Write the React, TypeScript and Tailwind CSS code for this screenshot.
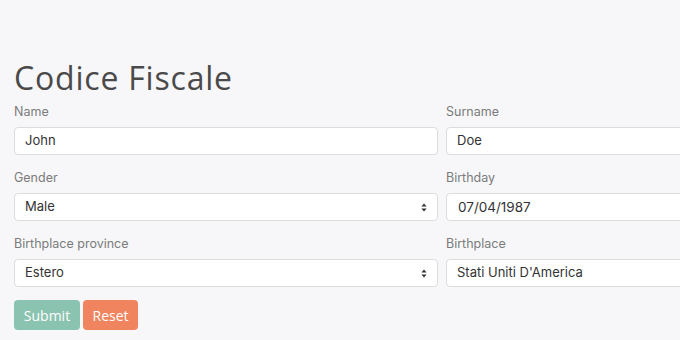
import React from "react";

const Arrows = () => (
  <svg width="6" height="9" viewBox="0 0 6 9" className="shrink-0">
    <path d="M3 0.5 L5.6 3.6 L0.4 3.6 Z" fill="#333" />
    <path d="M3 8.5 L5.6 5.4 L0.4 5.4 Z" fill="#333" />
  </svg>
);

function Field({ label, value, select, date }: { label: string; value: string; select?: boolean; date?: boolean }) {
  return (
    <div className="flex flex-col">
      <div className="h-[18px] leading-[18px] text-[12.5px] text-[#7b7b7b] mb-[6px]">{label}</div>
      <div className="h-[28px] bg-white border border-[#dcdcdc] rounded-[4px] flex items-center pl-[10px] pr-[10px] mb-[14px]">
        <span className={date ? "text-[13.5px] text-[#333] pl-[1px] flex-1" : "text-[13px] text-[#333] flex-1"}>{value}</span>
        {select && <Arrows />}
      </div>
    </div>
  );
}

export default function App() {
  return (
    <div
      className="w-[680px] h-[340px] overflow-hidden bg-[#f7f7f9] pl-[14px]"
      style={{ fontFamily: "Inter, 'Noto Sans', sans-serif" }}
    >
      <h1
        className="pt-[62px] h-[93px] text-[32px] leading-[32px] text-[#4a4a4a] font-normal mb-[10px] tracking-[0.8px]"
        style={{ fontFamily: "'Open Sans', sans-serif" }}
      >
        Codice Fiscale
      </h1>
      <div className="grid grid-cols-[424px_424px] gap-x-[8px]">
        <Field label="Name" value="John" />
        <Field label="Surname" value="Doe" />
        <Field label="Gender" value="Male" select />
        <Field label="Birthday" value="07/04/1987" date />
        <Field label="Birthplace province" value="Estero" select />
        <Field label="Birthplace" value="Stati Uniti D'America" />
      </div>
      <div className="flex gap-[3px] -mt-[1px]" style={{ fontFamily: "'Open Sans', sans-serif" }}>
        <button className="w-[66px] h-[30px] rounded-[4px] bg-[#8ac3af] text-white text-[14px]">Submit</button>
        <button className="w-[55px] h-[30px] rounded-[4px] bg-[#f0845e] text-white text-[14px]">Reset</button>
      </div>
    </div>
  );
}
